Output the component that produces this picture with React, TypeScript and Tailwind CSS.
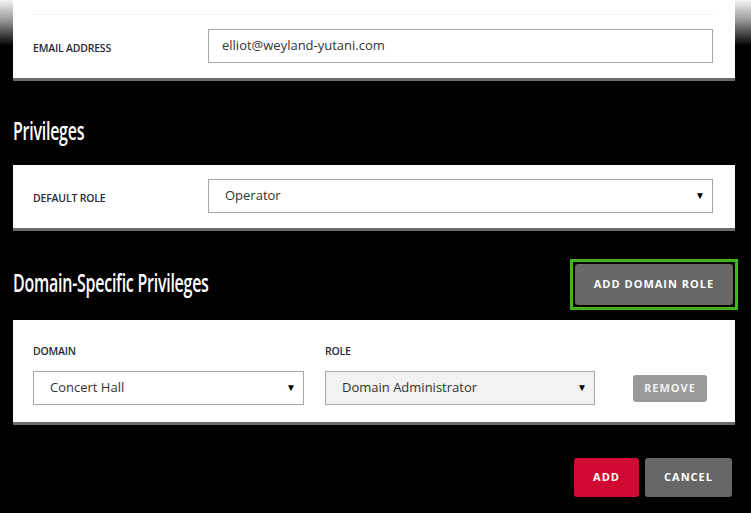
import React from 'react';

const body = { fontFamily: '"Open Sans", "Noto Sans", sans-serif' };
const heading = { fontFamily: '"Open Sans", "Noto Sans", sans-serif' };

function Arrow() {
  return <span className="absolute right-[7px] top-[47%] -translate-y-1/2 text-[10px] leading-none text-black">▼</span>;
}

function Select({ value, shaded }: { value: string; shaded?: boolean }) {
  return (
    <div
      className={`relative flex h-[34px] items-center border border-[#a6a6a6] pl-4 text-[13px] text-[#333] ${
        shaded ? 'bg-[#f2f2f2]' : 'bg-white'
      }`}
    >
      {value}
      <Arrow />
    </div>
  );
}

function Label({ children }: { children: React.ReactNode }) {
  return <span className="text-[10.5px] font-semibold uppercase tracking-[-0.2px] text-[#2a2a38]">{children}</span>;
}

function Heading({ children, className = '' }: { children: React.ReactNode; className?: string }) {
  return (
    <h2
      className={`origin-left scale-x-[0.64] whitespace-nowrap text-[25px] font-semibold leading-none tracking-[-0.4px] text-white ${className}`}
      style={heading}
    >
      {children}
    </h2>
  );
}

export default function App() {
  return (
    <div
      className="min-h-[513px] w-[751px] bg-[linear-gradient(to_bottom,#f4f4f4_0px,#9a9a9a_20px,#000_46px)] pl-[13px]"
      style={body}
    >
      <div className="w-[722px]">
        {/* contact card */}
        <div className="border-b-[3px] border-[#6b6b6b] bg-white pl-5 pr-[22px] pt-[14px] pb-[15px]">
          <div className="border-t border-[#f3f3f3]" />
          <div className="mt-[14px] flex items-center">
            <div className="w-[175px]">
              <Label>Email Address</Label>
            </div>
            <div className="flex h-[34px] flex-1 items-center border border-[#a6a6a6] pl-[13px] text-[13px] text-[#333]">
              elliot@weyland-yutani.com
            </div>
          </div>
        </div>

        <div className="flex h-[84px] items-center pt-[14px]">
          <Heading>Privileges</Heading>
        </div>

        <div className="border-b-[3px] border-[#6b6b6b] bg-white pl-5 pr-[22px] pt-[14px] pb-[15px]">
          <div className="flex items-center">
            <div className="w-[175px]">
              <Label>Default Role</Label>
            </div>
            <div className="flex-1">
              <Select value="Operator" />
            </div>
          </div>
        </div>

        <div className="flex items-center justify-between pt-[28px] pb-[10px]">
          <Heading className="mb-[5px]">Domain-Specific Privileges</Heading>
          <div className="-mr-[3px] border-[3px] border-[#41b51f] p-[2px]">
            <button className="h-[41px] w-[158px] rounded-[3px] bg-[#676767] text-[11px] font-bold tracking-[1px] text-white">
              ADD DOMAIN ROLE
            </button>
          </div>
        </div>

        <div className="border-b-[3px] border-[#6b6b6b] bg-white pl-5 pr-7 pt-[21px] pb-[17px]">
          <div className="flex items-end">
            <div className="w-[271px]">
              <div className="mb-[12px] leading-4">
                <Label>Domain</Label>
              </div>
              <Select value="Concert Hall" />
            </div>
            <div className="ml-[21px] w-[270px]">
              <div className="mb-[12px] leading-4">
                <Label>Role</Label>
              </div>
              <Select value="Domain Administrator" shaded />
            </div>
            <button className="mb-[3px] ml-auto h-[27px] w-[74px] rounded-[3px] bg-[#9a9a9a] text-[11px] font-bold tracking-[1px] text-[#f2f2f2]">
              REMOVE
            </button>
          </div>
        </div>

        <div className="mt-[33px] flex justify-end gap-[6px] pr-[3px]">
          <button className="h-[39px] w-[65px] rounded-[3px] bg-[#d10a34] text-[11px] font-bold tracking-[1px] text-white">
            ADD
          </button>
          <button className="h-[39px] w-[87px] rounded-[3px] bg-[#676767] text-[11px] font-bold tracking-[1px] text-white">
            CANCEL
          </button>
        </div>
      </div>
    </div>
  );
}
